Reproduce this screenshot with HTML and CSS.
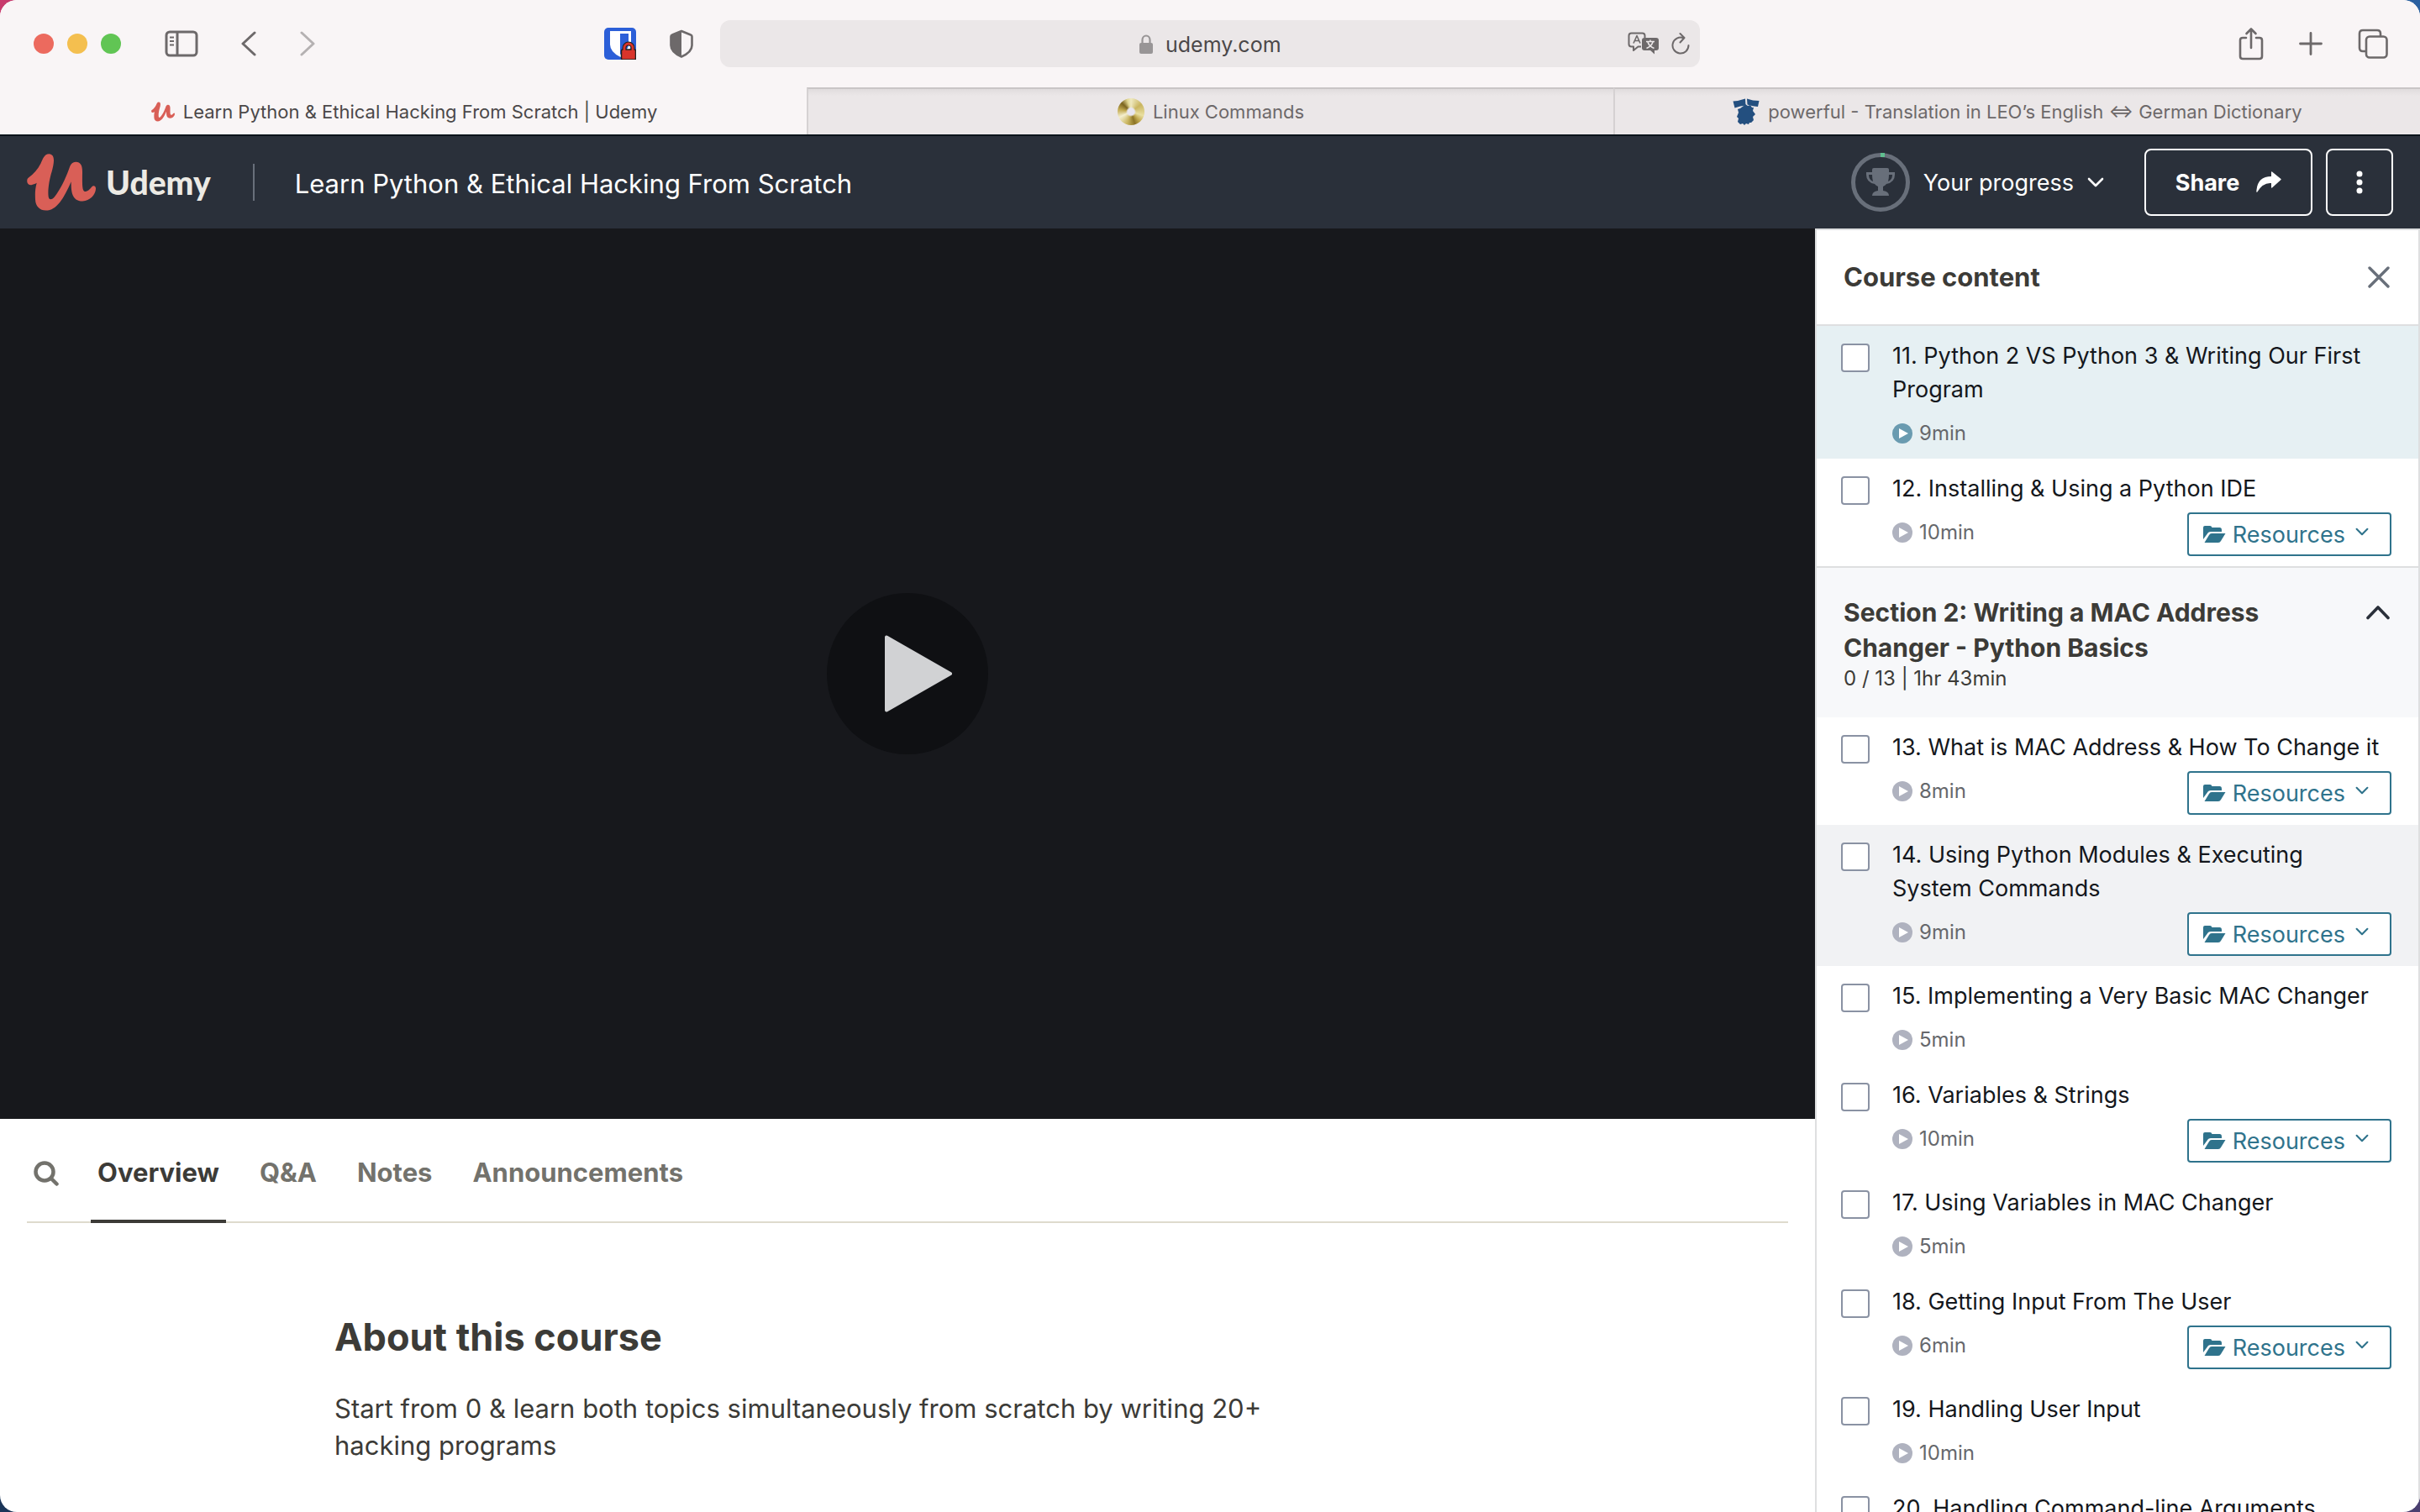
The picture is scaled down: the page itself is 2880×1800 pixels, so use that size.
FILE: index.html
```html
<!DOCTYPE html>
<html lang="en">
<head>
<meta charset="utf-8">
<meta name="viewport" content="width=device-width, initial-scale=1">
<title>Learn Python &amp; Ethical Hacking From Scratch | Udemy</title>
<link rel="stylesheet" href="styles.css">
</head>
<body>
<svg class="symbols" aria-hidden="true">
  <symbol id="udemy-mark" viewBox="36 37 246 203"><path fill="#d95f57" d="M37 131C35 141 42 149 52 148C58 147 64 145 71 141C65 165 65 180 66 200C67 225 82 239 104 239C142 239 168 196 194 136C194 170 195 205 235 206C262 206 283 180 282 160C281 150 272 149 267 156C258 167 248 175 240 170C232 163 234 130 234 100C234 78 227 66 211 66C196 66 191 78 186 92C172 130 155 165 135 190C128 199 120 202 115 196C108 180 115 130 125 100C133 72 139 38 115 37C98 37 93 55 86 70C75 92 60 108 42 122C38 125 37 128 37 131Z"/></symbol>
  <symbol id="chevron-down" viewBox="0 0 20 12"><path fill="none" stroke="currentColor" stroke-width="2.6" stroke-linecap="round" stroke-linejoin="round" d="M2 2l8 8 8-8"/></symbol>
  <symbol id="play-dot" viewBox="0 0 24 24"><circle cx="12" cy="12" r="12" fill="currentColor"/><path class="play-dot-arrow" d="M8 6v12l11-6z"/></symbol>
  <symbol id="folder" viewBox="0 0 28 22"><path fill="currentColor" d="M1 17V3a2 2 0 0 1 2-2h6q2 0 2.500 2h9q2.500 0 2.500 3v2H10q-3 0-4.500 3zM2.500 21L8 12q1-2 3-2h16.500L22 19q-1 2-3 2z"/></symbol>
</svg>

<div class="window">
  <header class="toolbar">
    <div class="toolbar-side">
      <div class="lights">
        <button class="light light-close" aria-label="Close"></button>
        <button class="light light-min" aria-label="Minimise"></button>
        <button class="light light-max" aria-label="Zoom"></button>
      </div>
      <button class="tool tool-sidebar" aria-label="Show sidebar"><svg width="40" height="32" viewBox="0 0 40 32" fill="none" stroke="currentColor" stroke-width="3"><rect x="2" y="2" width="36" height="28" rx="4"/><path d="M15 2v28"/><path stroke-width="2" d="M6 8.500h5M6 13h5M6 17.500h5"/></svg></button>
      <button class="tool tool-back" aria-label="Back"><svg width="20" height="30" viewBox="0 0 20 30" fill="none" stroke="currentColor" stroke-width="3" stroke-linecap="round" stroke-linejoin="round"><path d="M17 2L3 15l14 13"/></svg></button>
      <button class="tool tool-forward" aria-label="Forward"><svg width="20" height="30" viewBox="0 0 20 30" fill="none" stroke="currentColor" stroke-width="3" stroke-linecap="round" stroke-linejoin="round"><path d="M3 2l14 13L3 28"/></svg></button>
      <div class="extensions">
        <button class="tool" aria-label="Bitwarden"><svg width="38" height="38" viewBox="0 0 38 38"><rect width="38" height="38" rx="5" fill="#2c5fd8"/><path fill="#fff" d="M7 4h25v16q0 9-12.500 15Q7 29 7 20z"/><path fill="#2c5fd8" d="M19 7h10v13q0 7-10 12z"/><path fill="none" stroke="#222" stroke-width="5" d="M24 28v-4a5 5 0 0 1 10 0v4"/><rect x="20.500" y="26" width="17" height="12" rx="1.500" fill="#d9342b" stroke="#222" stroke-width="1.500"/><path fill="none" stroke="#d9342b" stroke-width="2.800" d="M24 28v-4a5 5 0 0 1 10 0v4"/></svg></button>
        <button class="tool" aria-label="Privacy report"><svg width="28" height="34" viewBox="0 0 28 34"><path fill="none" stroke="currentColor" stroke-width="2.600" stroke-linejoin="round" d="M14 2l11 4.500q1.500.5 1.500 2V19q0 8-12.500 13.500Q1.500 27 1.500 19V8.500q0-1.500 1.500-2z"/><path fill="currentColor" d="M14 1.500v31Q1.500 27 1.500 19V8.500q0-1.500 1.500-2z"/></svg></button>
      </div>
    </div>
    <div class="address">
      <label class="address-main">
        <svg width="18" height="24" viewBox="0 0 18 24" aria-hidden="true"><rect x="1" y="10" width="16" height="13" rx="2" fill="#989596"/><path fill="none" stroke="#989596" stroke-width="2.200" d="M4.500 11V6.500a4.500 5 0 0 1 9 0V11"/></svg>
        <input class="address-input" type="text" value="udemy.com" aria-label="Address">
      </label>
      <div class="address-tools">
        <button class="tool" aria-label="Translate"><svg width="38" height="28" viewBox="0 0 38 28" fill="none" stroke="currentColor" stroke-width="2" stroke-linejoin="round"><path d="M16 17.500h-3.500L7 22v-4.500H4.500q-3 0-3-3V4.500q0-3 3-3h13q3 0 3 3V7"/><path d="M7 13.500L11 4.500l4 9M8.500 10.500h5" stroke-width="1.600"/><rect x="17" y="7" width="20" height="15" rx="3" fill="currentColor" stroke="none"/><path d="M26 21h6v5.500z" fill="currentColor" stroke="none"/><path stroke="#ebe7e8" stroke-width="1.600" d="M22 11.500h10M27 9.500v2M30 12q-1.500 5-7.500 7.500M24 12q1.500 5 7.500 7.500"/></svg></button>
        <button class="tool" aria-label="Reload"><svg width="22" height="28" viewBox="0 0 22 28" fill="none" stroke="currentColor" stroke-width="2" stroke-linecap="round" stroke-linejoin="round"><path d="M14.500 7.200A9.500 9.500 0 1 0 20.500 16M10.500 2l5 5-5 5.500"/></svg></button>
      </div>
    </div>
    <div class="toolbar-side toolbar-right">
      <button class="tool" aria-label="Share page"><svg width="30" height="40" viewBox="0 0 30 40" fill="none" stroke="currentColor" stroke-width="2.600" stroke-linecap="round" stroke-linejoin="round"><path d="M9 13H5q-3 0-3 3v19q0 3 3 3h20q3 0 3-3V16q0-3-3-3h-4M15 25V3M9.500 8L15 2.500 20.500 8"/></svg></button>
      <button class="tool" aria-label="New tab"><svg width="28" height="28" viewBox="0 0 28 28" fill="none" stroke="currentColor" stroke-width="2.800" stroke-linecap="round"><path d="M14 1.500v25M1.500 14h25"/></svg></button>
      <button class="tool" aria-label="Tab overview"><svg width="36" height="36" viewBox="0 0 36 36" fill="none" stroke="currentColor" stroke-width="2.600"><path d="M9 27H6q-4 0-4-4V6q0-4 4-4h17q4 0 4 4v3"/><rect x="10" y="9.500" width="24.500" height="25" rx="4"/></svg></button>
    </div>
  </header>

  <nav class="browser-tabs" aria-label="Browser tabs">
    <a class="browser-tab is-active" href="#"><svg width="28" height="24"><use href="#udemy-mark"/></svg><span>Learn Python &amp; Ethical Hacking From Scratch | Udemy</span></a>
    <a class="browser-tab" href="#"><i class="disc"></i><span>Linux Commands</span></a>
    <a class="browser-tab" href="#"><svg width="32" height="32" viewBox="0 0 32 32" fill="#234f7f"><path d="M.5 3.500Q8 3 15 .5l.5 8Q9 9 2.500 11.500zM17 .5q7 2.500 14.500 2.500L30 10q-6-.5-12.500-2.500z"/><path d="M13 9l2-2 3 2 3-1 2 3 2 0-1 4 3 4-3 3 1 4-3 3-2 0-1 2-3-1-2 2-2-2-3 1-2-2-1-1 1-4-2-2 2-5-1-4 3-1z"/></svg><span>powerful - Translation in LEO’s English ⇔ German Dictionary</span></a>
  </nav>

  <header class="course-bar">
    <a class="brand" href="#"><svg width="82" height="68" aria-hidden="true"><use href="#udemy-mark"/></svg><span>Udemy</span></a>
    <h1 class="course-title">Learn Python &amp; Ethical Hacking From Scratch</h1>
    <button class="progress">
      <svg width="70" height="70" viewBox="0 0 70 70" aria-hidden="true"><circle cx="35" cy="35" r="32.500" fill="none" stroke="#686f7a" stroke-width="5"/><path d="M35 0h5v5h-5z" fill="#5fbf8f"/><path fill="#686f7a" d="M25 20q0-2 2-2h16q2 0 2 2v3h7v3q0 9-10 11-1.500 2-4 3v5q7 1 7 6H25q0-5 7-6v-5q-2.500-1-4-3-10-2-10-11v-3h7zm0 6h-4q0 6 5 8-1-4-1-8zm20 0q0 4-1 8 5-2 5-8z"/></svg>
      <span>Your progress</span>
      <svg class="progress-chevron" width="20" height="12"><use href="#chevron-down"/></svg>
    </button>
    <button class="outline-button">Share<svg width="30" height="26" viewBox="0 0 30 26" aria-hidden="true"><path fill="currentColor" d="M18 1q0-1 1-.5L29.500 9q.5.5 0 1L19 19.500q-1 .5-1-.5v-5Q8 13 1 25 0 25 .5 22 2 6 18 6z"/></svg></button>
    <button class="outline-button more-button" aria-label="More options"><svg width="8" height="28" viewBox="0 0 8 28" fill="currentColor"><circle cx="4" cy="4" r="3.500"/><circle cx="4" cy="14" r="3.500"/><circle cx="4" cy="24" r="3.500"/></svg></button>
  </header>

  <div class="content">
    <main class="stage">
      <section class="player" aria-label="Video player">
        <button class="play" aria-label="Play"><svg width="80" height="92" viewBox="0 0 80 92"><path fill="#d1d2d4" stroke="#d1d2d4" stroke-width="4" stroke-linejoin="round" d="M2 2.500v87L78 46z"/></svg></button>
      </section>
      <nav class="tabs" aria-label="Course tabs">
        <button class="tab-search" aria-label="Search"><svg width="30" height="30" viewBox="0 0 30 30" fill="none" stroke="currentColor" stroke-width="4.500" stroke-linecap="round"><circle cx="13" cy="13" r="10.500"/><path d="M21 21l6.500 6.500"/></svg></button>
        <a class="tab is-current" href="#overview">Overview</a>
        <a class="tab" href="#qa">Q&amp;A</a>
        <a class="tab" href="#notes">Notes</a>
        <a class="tab" href="#announcements">Announcements</a>
      </nav>
      <section class="about" id="overview">
        <h2>About this course</h2>
        <p>Start from 0 &amp; learn both topics simultaneously from scratch by writing 20+ hacking programs</p>
      </section>
    </main>

    <aside class="curriculum">
      <div class="curriculum-head">
        <h2>Course content</h2>
        <button class="icon-button" aria-label="Close course content"><svg width="26" height="26" viewBox="0 0 26 26" fill="none" stroke="#686f7a" stroke-width="3.400" stroke-linecap="round"><path d="M2 2l22 22M24 2L2 24"/></svg></button>
      </div>
      <ul class="lectures">
        <li class="lecture is-playing"><input type="checkbox" id="l11"><div class="lecture-body"><label for="l11">11. Python 2 VS Python 3 &amp; Writing Our First Program</label><div class="lecture-meta"><span class="duration"><svg width="24" height="24"><use href="#play-dot"/></svg>9min</span></div></div></li>
        <li class="lecture"><input type="checkbox" id="l12"><div class="lecture-body"><label for="l12">12. Installing &amp; Using a Python IDE</label><div class="lecture-meta"><span class="duration"><svg width="24" height="24"><use href="#play-dot"/></svg>10min</span><button class="resources"><svg width="28" height="22"><use href="#folder"/></svg>Resources<svg class="resources-chevron" width="16" height="10"><use href="#chevron-down"/></svg></button></div></div></li>
      </ul>
      <div class="section-head">
        <div>
          <h3>Section 2: Writing a MAC Address Changer - Python Basics</h3>
          <p>0 / 13 | 1hr 43min</p>
        </div>
        <button class="icon-button" aria-label="Collapse section"><svg width="28" height="18" viewBox="0 0 28 18" fill="none" stroke="#2a303a" stroke-width="3.600" stroke-linecap="round" stroke-linejoin="round"><path d="M2 15.500L14 3l12 12.500"/></svg></button>
      </div>
      <ul class="lectures">
        <li class="lecture"><input type="checkbox" id="l13"><div class="lecture-body"><label for="l13">13. What is MAC Address &amp; How To Change it</label><div class="lecture-meta"><span class="duration"><svg width="24" height="24"><use href="#play-dot"/></svg>8min</span><button class="resources"><svg width="28" height="22"><use href="#folder"/></svg>Resources<svg class="resources-chevron" width="16" height="10"><use href="#chevron-down"/></svg></button></div></div></li>
        <li class="lecture is-hovered"><input type="checkbox" id="l14"><div class="lecture-body"><label for="l14">14. Using Python Modules &amp; Executing System Commands</label><div class="lecture-meta"><span class="duration"><svg width="24" height="24"><use href="#play-dot"/></svg>9min</span><button class="resources"><svg width="28" height="22"><use href="#folder"/></svg>Resources<svg class="resources-chevron" width="16" height="10"><use href="#chevron-down"/></svg></button></div></div></li>
        <li class="lecture"><input type="checkbox" id="l15"><div class="lecture-body"><label for="l15">15. Implementing a Very Basic MAC Changer</label><div class="lecture-meta"><span class="duration"><svg width="24" height="24"><use href="#play-dot"/></svg>5min</span></div></div></li>
        <li class="lecture"><input type="checkbox" id="l16"><div class="lecture-body"><label for="l16">16. Variables &amp; Strings</label><div class="lecture-meta"><span class="duration"><svg width="24" height="24"><use href="#play-dot"/></svg>10min</span><button class="resources"><svg width="28" height="22"><use href="#folder"/></svg>Resources<svg class="resources-chevron" width="16" height="10"><use href="#chevron-down"/></svg></button></div></div></li>
        <li class="lecture"><input type="checkbox" id="l17"><div class="lecture-body"><label for="l17">17. Using Variables in MAC Changer</label><div class="lecture-meta"><span class="duration"><svg width="24" height="24"><use href="#play-dot"/></svg>5min</span></div></div></li>
        <li class="lecture"><input type="checkbox" id="l18"><div class="lecture-body"><label for="l18">18. Getting Input From The User</label><div class="lecture-meta"><span class="duration"><svg width="24" height="24"><use href="#play-dot"/></svg>6min</span><button class="resources"><svg width="28" height="22"><use href="#folder"/></svg>Resources<svg class="resources-chevron" width="16" height="10"><use href="#chevron-down"/></svg></button></div></div></li>
        <li class="lecture"><input type="checkbox" id="l19"><div class="lecture-body"><label for="l19">19. Handling User Input</label><div class="lecture-meta"><span class="duration"><svg width="24" height="24"><use href="#play-dot"/></svg>10min</span></div></div></li>
        <li class="lecture"><input type="checkbox" id="l20"><div class="lecture-body"><label for="l20">20. Handling Command-line Arguments</label></div></li>
      </ul>
    </aside>
  </div>
</div>
</body>
</html>
```
FILE: styles.css
```css
* { box-sizing: border-box; }

body {
  margin: 0;
  font-family: Inter, "Liberation Sans", sans-serif;
  font-size: 27px;
  color: #3c3b37;
  background:
    linear-gradient(90deg, #c83a6c, #2a60a0) top / 100% 50% no-repeat,
    linear-gradient(90deg, #1b3558, #4a3f70) bottom / 100% 50% no-repeat;
}

h1, h2, h3, p, ul { margin: 0; padding: 0; }
ul { list-style: none; }
a { color: inherit; text-decoration: none; }
svg { display: block; flex: none; }

button {
  margin: 0;
  padding: 0;
  border: 0;
  background: none;
  color: inherit;
  font: inherit;
  cursor: pointer;
}

.symbols { position: absolute; width: 0; height: 0; }

.window {
  display: flex;
  flex-direction: column;
  height: 100vh;
  overflow: hidden;
  border-radius: 20px;
  background: #fff;
}

/* Browser toolbar */
.toolbar {
  display: grid;
  flex: none;
  grid-template-columns: 1fr minmax(auto, 1166px) 1fr;
  align-items: center;
  height: 104px;
  background: #f9f5f6;
  color: #6d696a;
}
.toolbar-side {
  display: flex;
  align-items: center;
  padding-left: 40px;
}
.lights { display: flex; gap: 16px; }
.light { width: 24px; height: 24px; border-radius: 50%; }
.light-close { background: #ec6a5e; }
.light-min { background: #f4bf4f; }
.light-max { background: #61c554; }
.tool-sidebar { margin-left: 52px; }
.tool-back { margin-left: 50px; }
.tool-forward { margin-left: 50px; color: #b5b1b2; }
.extensions {
  display: flex;
  align-items: center;
  gap: 40px;
  margin: 0 32px 0 auto;
}
.address {
  display: grid;
  grid-template-columns: 1fr auto 1fr;
  align-items: center;
  height: 56px;
  border-radius: 12px;
  background: #ebe7e8;
}
.address-main {
  display: flex;
  grid-column: 2;
  align-items: center;
  gap: 14px;
  padding-top: 2px;
}
.address-input {
  width: 138px;
  padding: 0;
  border: 0;
  background: none;
  color: #4b4849;
  font: inherit;
  font-size: 25px;
}
.address-tools {
  display: flex;
  align-items: center;
  justify-content: flex-end;
  gap: 14px;
  padding-right: 12px;
}
.toolbar-right {
  justify-content: flex-end;
  gap: 42px;
  padding-right: 38px;
}

.browser-tabs {
  display: grid;
  flex: none;
  grid-template-columns: repeat(3, 1fr);
  height: 56px;
  background: #f9f5f6;
}
.browser-tab {
  display: flex;
  align-items: center;
  justify-content: center;
  gap: 10px;
  border-top: 2px solid #c9c5c6;
  border-left: 2px solid #d5d1d2;
  background: linear-gradient(#e0dcdd, #ebe7e8 8px);
  color: #6d696a;
  font-size: 22px;
}
.browser-tab.is-active {
  border-color: #f9f5f6;
  background: #f9f5f6;
  color: #4b4849;
}
.disc {
  width: 32px;
  height: 32px;
  border-radius: 50%;
  background:
    radial-gradient(circle, #e8e6f0 4px, transparent 6px),
    conic-gradient(#efe9c0, #c9b560 15%, #e9dfa0 30%, #c2aa50 38%, #8c7426 45%, #c9b560 55%, #f4efcf 68%, #c2aa50 78%, #7b6420 87%, #e0d590 95%, #efe9c0);
}

/* Course header */
.course-bar {
  display: flex;
  flex: none;
  align-items: center;
  height: 112px;
  padding: 0 32px;
  border-top: 2px solid #0b141b;
  background: #2a303a;
  color: #fff;
}
.brand {
  display: flex;
  align-items: center;
  gap: 12px;
  color: #eceae4;
  font-family: Lato, sans-serif;
  font-size: 39px;
  font-weight: 900;
}
.course-title {
  height: 44px;
  margin-left: 50px;
  padding-left: 48px;
  border-left: 2px solid #686f7a;
  font-size: 31px;
  font-weight: 400;
  line-height: 48px;
}
.progress {
  display: flex;
  align-items: center;
  gap: 16px;
  margin: 0 48px 0 auto;
}
.outline-button {
  display: flex;
  align-items: center;
  justify-content: center;
  gap: 20px;
  width: 200px;
  height: 80px;
  border: 2px solid #fff;
  border-radius: 8px;
  font-weight: 700;
}
.more-button { width: 80px; margin-left: 16px; }

/* Page columns */
.content {
  display: grid;
  flex: 1;
  grid-template-columns: 3fr 1fr;
  min-height: 0;
}
.stage { min-width: 0; overflow: hidden; }
.player {
  display: grid;
  place-items: center;
  aspect-ratio: 108 / 53;
  background: #17181c;
}
.play {
  display: grid;
  place-items: center;
  width: 192px;
  height: 192px;
  padding-left: 26px;
  border-radius: 50%;
  background: #0f1013;
}
.tabs {
  display: flex;
  gap: 32px;
  height: 124px;
  margin: 0 32px;
  border-bottom: 2px solid #dedacd;
}
.tab-search { padding: 8px 6px 0 8px; color: #73726c; }
.tab {
  height: 124px;
  padding: 0 8px;
  color: #73726c;
  font-size: 31px;
  font-weight: 700;
  line-height: 128px;
}
.tab.is-current {
  border-bottom: 4px solid #3c3b37;
  color: #3c3b37;
}
.about {
  display: flex;
  flex-direction: column;
  gap: 35px;
  max-width: 1364px;
  margin: 0 auto;
  padding-top: 108px;
}
.about h2 { font-size: 45px; font-weight: 700; line-height: 56px; }
.about p { max-width: 1120px; font-size: 31px; line-height: 44px; }

/* Course content column */
.curriculum {
  min-width: 0;
  overflow: hidden;
  border: solid #dedfe0;
  border-width: 2px 2px 0;
}
.curriculum-head {
  display: flex;
  align-items: center;
  justify-content: space-between;
  height: 114px;
  padding: 0 34px 0 32px;
  border-bottom: 2px solid #dedfe0;
}
.curriculum h2 { font-size: 31px; line-height: 42px; }
.curriculum h3 { font-size: 30px; line-height: 42px; }
.lecture {
  display: flex;
  gap: 27px;
  padding: 16px 32px 12px 29px;
}
.lecture.is-playing { background: #e6f0f3; }
.lecture.is-hovered { background: #f1f2f4; }
.lecture input {
  flex: none;
  width: 34px;
  height: 34px;
  margin: 5px 0 0;
  border: 2px solid #8a92a3;
  border-radius: 4px;
  background: #fff;
  appearance: none;
}
.lecture-body { flex: 1; }
.lecture label {
  display: block;
  padding-right: 8px;
  color: #14171c;
  line-height: 40px;
}
.lecture-meta {
  display: flex;
  align-items: flex-start;
  justify-content: space-between;
  min-height: 42px;
  margin-top: 8px;
}
.duration {
  display: flex;
  align-items: center;
  gap: 8px;
  padding-top: 8px;
  color: #66686c;
  font-size: 24px;
  line-height: 32px;
}
.duration svg { color: #afb2bf; }
.play-dot-arrow { fill: #fff; }
.is-playing .duration svg { color: #6a9bb0; }
.resources {
  display: flex;
  align-items: center;
  gap: 8px;
  height: 52px;
  padding: 0 25px 0 16px;
  border: 2px solid #2f738c;
  border-radius: 4px;
  background: #fff;
  color: #2f738c;
}
.resources-chevron { margin: 0 0 6px 4px; }
.section-head {
  display: flex;
  align-items: flex-start;
  justify-content: space-between;
  gap: 48px;
  height: 180px;
  padding: 32px 34px 0 32px;
  border-top: 2px solid #dedfe0;
  background: #f7f8fa;
}
.section-head p { font-size: 24px; line-height: 32px; }
.icon-button { padding-top: 12px; }
.curriculum-head .icon-button { padding: 0; }
```
